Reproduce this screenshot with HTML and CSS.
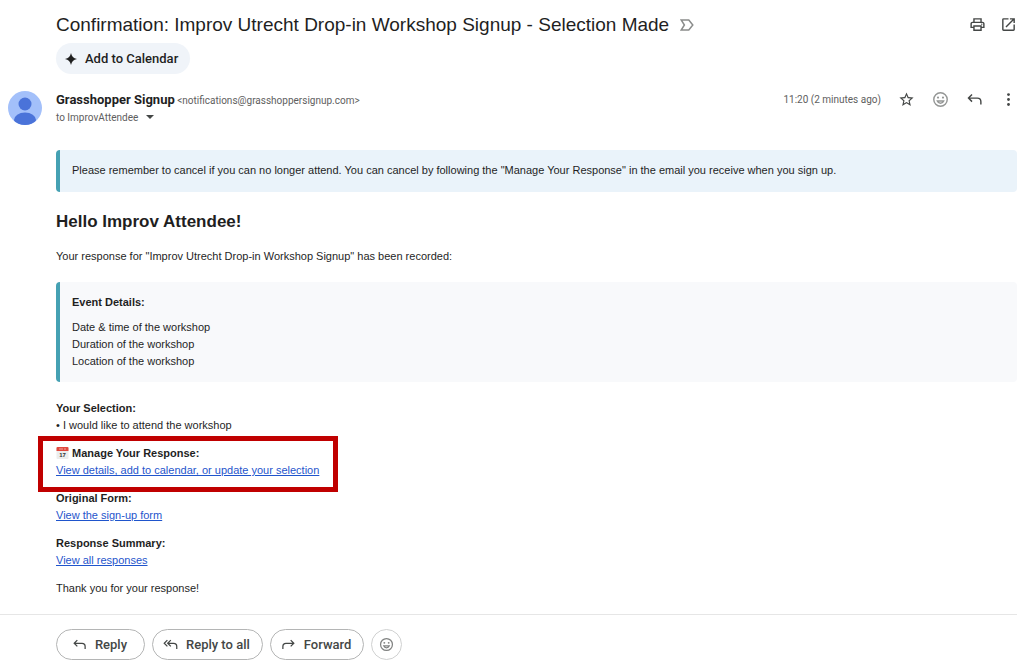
FILE: index.html
```
<!DOCTYPE html>
<html lang="en">
<head>
    <meta charset="UTF-8">
    <meta name="viewport" content="width=device-width, initial-scale=1.0">
    <title>Confirmation: Improv Utrecht Drop-in Workshop Signup</title>
    <link rel="stylesheet" href="styles.css">
</head>
<body>
    <header class="mail-header">
        <div class="subject-row">
            <h1 class="subject">Confirmation: Improv Utrecht Drop-in Workshop Signup - Selection Made</h1>
            <svg class="important" viewBox="0 0 14 12"><path d="M1.2 1h7.6l4 5-4 5H1.2l3.2-5z"/></svg>
            <div class="subject-actions">
                <button class="icon-button" aria-label="Print">
                    <svg viewBox="0 0 24 24"><path d="M19 8h-1V3H6v5H5c-1.660 0-3 1.340-3 3v6h4v4h12v-4h4v-6c0-1.660-1.340-3-3-3zM8 5h8v3H8V5zm8 14H8v-4h8v4zm2-4v-2H6v2H4v-4c0-.55.45-1 1-1h14c.55 0 1 .45 1 1v4h-2z"/><circle cx="18" cy="11.500" r="1"/></svg>
                </button>
                <button class="icon-button" aria-label="Open in new window">
                    <svg viewBox="0 0 24 24"><path d="M19 19H5V5h7V3H5a2 2 0 0 0-2 2v14a2 2 0 0 0 2 2h14c1.100 0 2-.9 2-2v-7h-2v7zM14 3v2h3.590l-9.830 9.830 1.410 1.410L19 6.410V10h2V3h-7z"/></svg>
                </button>
            </div>
        </div>
        <button class="chip">
            <svg viewBox="0 0 12 12"><path d="M6 0c.7 3.600 2.400 5.300 6 6-3.600.7-5.300 2.400-6 6-.7-3.600-2.400-5.300-6-6 3.600-.7 5.300-2.400 6-6z"/></svg>
            Add to Calendar
        </button>
    </header>

    <section class="sender-row">
        <svg class="avatar" viewBox="0 0 34 34">
            <clipPath id="avatarClip"><circle cx="17" cy="17" r="17"/></clipPath>
            <g clip-path="url(#avatarClip)">
                <rect width="34" height="34" fill="#a3c0fa"/>
                <circle cx="17" cy="13" r="6.500" fill="#4a73d9"/>
                <ellipse cx="17" cy="29" rx="11" ry="7.500" fill="#4a73d9"/>
            </g>
        </svg>
        <div class="sender">
            <div><strong class="sender-name">Grasshopper Signup</strong> <span class="sender-email">&lt;notifications@grasshoppersignup.com&gt;</span></div>
            <div class="recipient">to ImprovAttendee <span class="caret"></span></div>
        </div>
        <div class="sender-actions">
            <span class="time">11:20 (2 minutes ago)</span>
            <button class="icon-button" aria-label="Star">
                <svg viewBox="0 0 24 24"><path d="M22 9.240l-7.190-.62L12 2 9.190 8.630 2 9.240l5.460 4.730L5.820 21 12 17.270 18.180 21l-1.630-7.030L22 9.240zM12 15.400l-3.760 2.270 1-4.280-3.320-2.880 4.380-.38L12 6.100l1.710 4.040 4.380.38-3.320 2.880 1 4.280L12 15.400z"/></svg>
            </button>
            <button class="icon-button light" aria-label="Add reaction">
                <svg viewBox="0 0 24 24"><g class="line"><circle cx="12" cy="12" r="9.500"/><path d="M7.500 14h9c-.8 2-2.500 3.200-4.500 3.200S8.300 16 7.500 14z"/></g><circle cx="8.500" cy="9.300" r="1.500"/><circle cx="15.500" cy="9.300" r="1.500"/></svg>
            </button>
            <button class="icon-button" aria-label="Reply">
                <svg viewBox="0 0 24 24"><path class="line" d="M8.500 5L3.500 10l5 5M4 10h12c3 0 5 2 5 5v4"/></svg>
            </button>
            <button class="icon-button" aria-label="More">
                <svg viewBox="0 0 24 24"><circle cx="12" cy="5" r="2"/><circle cx="12" cy="12" r="2"/><circle cx="12" cy="19" r="2"/></svg>
            </button>
        </div>
    </section>

    <main class="mail-body">
        <div class="notice">Please remember to cancel if you can no longer attend. You can cancel by following the "Manage Your Response" in the email you receive when you sign up.</div>

        <h2>Hello Improv Attendee!</h2>
        <p class="intro">Your response for "Improv Utrecht Drop-in Workshop Signup" has been recorded:</p>

        <div class="event">
            <h3>Event Details:</h3>
            <p>Date &amp; time of the workshop<br>Duration of the workshop<br>Location of the workshop</p>
        </div>

        <div class="sections">
            <div>
                <h3>Your Selection:</h3>
                <p>• I would like to attend the workshop</p>
            </div>
            <div class="manage">
                <h3>
                    <svg class="calendar" viewBox="0 0 12 12"><rect width="12" height="12" rx="1" fill="#eceded"/><path d="M0 4V1q0-1 1-1h10q1 0 1 1v3z" fill="#e0483e"/><path d="M3 2h1M5 2h1M8 2h1" stroke="#fff"/><text x="6" y="10" text-anchor="middle" font-size="6">17</text></svg>
                    Manage Your Response:
                </h3>
                <a href="#">View details, add to calendar, or update your selection</a>
            </div>
            <div>
                <h3>Original Form:</h3>
                <a href="#">View the sign-up form</a>
            </div>
            <div>
                <h3>Response Summary:</h3>
                <a href="#">View all responses</a>
            </div>
            <p>Thank you for your response!</p>
        </div>
    </main>

    <footer class="reply-bar">
        <button class="pill">
            <svg viewBox="0 0 24 24"><path class="line" d="M8.500 5L3.500 10l5 5M4 10h12c3 0 5 2 5 5v4"/></svg>
            Reply
        </button>
        <button class="pill">
            <svg viewBox="0 0 24 24"><path class="line" d="M7 5l-5 5 5 5M12.500 5l-5 5 5 5M8 10h9c3 0 5 2 5 5v4"/></svg>
            Reply to all
        </button>
        <button class="pill">
            <svg viewBox="0 0 24 24"><path class="line" d="M15.500 5l5 5-5 5M20 10H8c-3 0-5 2-5 5v4"/></svg>
            Forward
        </button>
        <button class="pill round" aria-label="Add reaction">
            <svg viewBox="0 0 24 24"><g class="line"><circle cx="12" cy="12" r="9.500"/><path d="M7.500 14h9c-.8 2-2.500 3.200-4.500 3.200S8.300 16 7.500 14z"/></g><circle cx="8.500" cy="9.300" r="1.500"/><circle cx="15.500" cy="9.300" r="1.500"/></svg>
        </button>
    </footer>
</body>
</html>
```
FILE: styles.css
```
:root {
    --text-color: #1f1f1f;
    --muted: #5e5e5e;
    --icon: #444746;
    --teal: #45a1b3;
    --link: #1f55cc;
    --highlight: #c00000;
    --ui-font: Roboto, "Noto Sans", sans-serif;
}

* {
    box-sizing: border-box;
}

body {
    margin: 0;
    background-color: #fff;
    color: var(--text-color);
    font-family: "Liberation Sans", Arial, sans-serif;
    font-size: 11px;
    line-height: 17px;
}

h1, h2, h3, p {
    margin: 0;
}

h3 {
    font-size: 11px;
}

a {
    color: var(--link);
    text-underline-offset: 1px;
}

button {
    font-family: var(--ui-font);
    color: var(--icon);
    border: none;
    padding: 0;
    background: none;
    cursor: pointer;
}

svg {
    fill: currentColor;
    flex: none;
}

.line {
    fill: none;
    stroke: currentColor;
    stroke-width: 2;
}

.mail-header {
    padding: 12px 7px 0 56px;
}

.subject-row {
    display: flex;
    align-items: center;
    height: 25px;
}

.subject {
    font-size: 19px;
    font-weight: 400;
    line-height: 25px;
}

.important {
    width: 14px;
    height: 12px;
    margin-left: 11px;
    fill: none;
    stroke: #8a8c8b;
    stroke-width: 1.5;
}

.subject-actions {
    display: flex;
    gap: 14px;
    margin-left: auto;
}

.icon-button {
    width: 17px;
    height: 17px;
}

.icon-button svg {
    display: block;
    width: 17px;
    height: 17px;
}

.light {
    color: #949695;
}

.chip {
    display: flex;
    align-items: center;
    gap: 8px;
    height: 31px;
    margin-top: 6px;
    padding: 0 12px 0 9px;
    border-radius: 16px;
    background-color: #f0f4f9;
    color: var(--text-color);
    font-size: 13px;
    font-weight: 500;
}

.chip svg {
    width: 12px;
    height: 12px;
}

.sender-row {
    display: flex;
    gap: 14px;
    margin-top: 17px;
    padding: 0 7px 0 8px;
    font-family: var(--ui-font);
    font-size: 10px;
    color: var(--muted);
}

.avatar {
    width: 34px;
    height: 34px;
}

.sender-name {
    color: var(--text-color);
    font-size: 13px;
}

.caret {
    display: inline-block;
    margin: 0 0 2px 5px;
    border: 4px solid transparent;
    border-top-color: var(--icon);
    border-bottom: none;
}

.sender-actions {
    display: flex;
    align-items: center;
    gap: 17px;
    height: 17px;
    margin-left: auto;
}

.mail-body {
    padding: 24px 7px 17px 56px;
}

.notice,
.event {
    padding: 12px;
    border-left: 4px solid var(--teal);
    border-radius: 4px;
}

.notice {
    padding-bottom: 13px;
    background-color: #eaf3fa;
}

h2 {
    margin-top: 20px;
    font-size: 17px;
    line-height: 20px;
}

.intro {
    margin: 16px 0 17px;
}

.event {
    background-color: #f8f9fb;
}

.event h3 {
    margin-bottom: 8px;
}

.sections {
    display: flex;
    flex-direction: column;
    align-items: flex-start;
    gap: 11px;
    margin-top: 18px;
}

.manage {
    position: relative;
}

/* Red frame drawn over the message around the manage link */
.manage::after {
    content: "";
    position: absolute;
    inset: -9px -19px -13px -18px;
    border: 5px solid var(--highlight);
    pointer-events: none;
}

.calendar {
    width: 13px;
    height: 12px;
    vertical-align: -2px;
}

.calendar text {
    fill: #333;
}

.reply-bar {
    display: flex;
    gap: 7px;
    margin-right: 7px;
    padding: 14px 0 8px 56px;
    border-top: 1px solid #e6e6e6;
}

.pill {
    display: flex;
    align-items: center;
    justify-content: center;
    gap: 8px;
    min-width: 89px;
    height: 31px;
    padding: 0 12px 0 10px;
    border: 1px solid #b4b5b5;
    border-radius: 16px;
    font-size: 13px;
    font-weight: 500;
}

.pill svg {
    width: 15px;
    height: 15px;
}

.round {
    min-width: 31px;
    padding: 0;
    border-color: #d0d1d1;
    color: #808281;
}
```
